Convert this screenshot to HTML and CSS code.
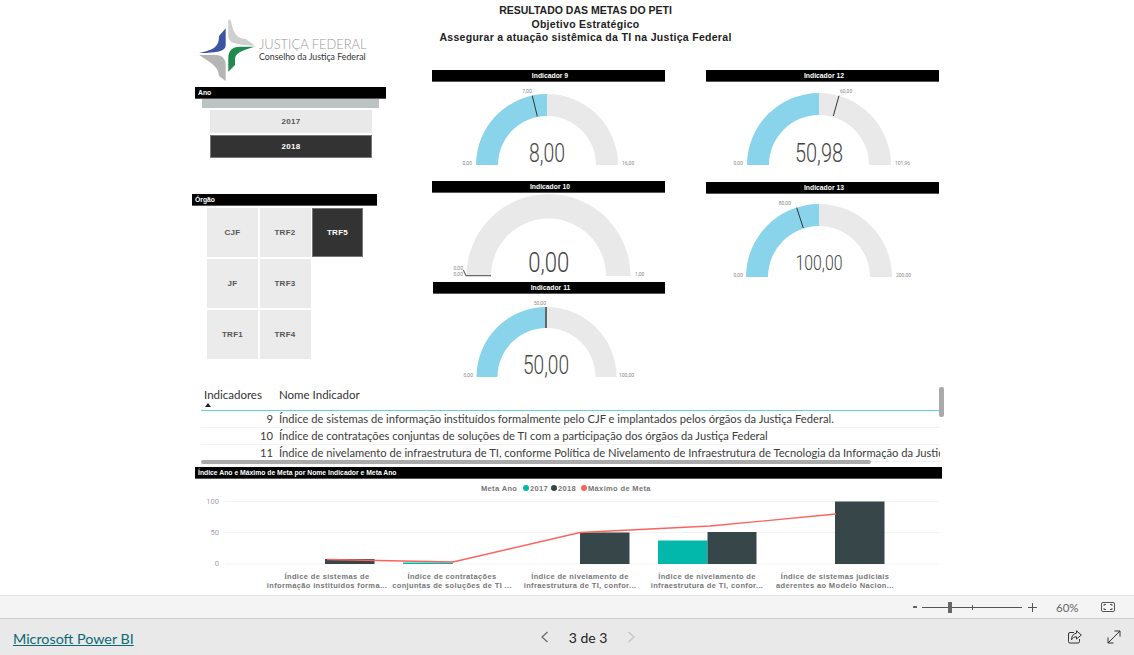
FILE: index.html
```html
<!DOCTYPE html>
<html lang="pt-BR">
<head>
<meta charset="UTF-8" />
<title>Resultado das Metas do PETI</title>
<link rel="stylesheet" href="styles.css">
</head>
<body>

<!-- ==========  REPORT CANVAS  ========== -->
<main class="canvas">
    <div class="top">

        <!-- Logo + slicers -->
        <aside class="side">
            <div class="logo">
                <svg width="61" height="66" viewBox="0 0 61 66">
                    <path fill="#3a56a0" d="M27.7 10.300 V27 C27.700 33 20 35 1 35 C13 32 21 31 21 18 Z"/>
                    <path fill="#cfcfcf" d="M30.300 1.300 V18 C30.300 24 35 27 56.700 27.500 L48 21 C40 21 35 16 33 3 Z"/>
                    <path fill="#1f8a4c" d="M56.700 28.700 H42 C34 28.700 30.300 33 30.300 40 V53.700 L37 47 V42 C37 35 42 33 56.700 28.700 Z"/>
                    <path fill="#b5b5b5" d="M1.300 37 H18 C24 37 27.700 41 27.700 47 V63 L21 58 C20 47 12 45 1.300 37 Z"/>
                </svg>
                <div class="logo-text">
                    <span class="logo-name">JUSTIÇA FEDERAL</span>
                    <span class="logo-sub">Conselho da Justiça Federal</span>
                </div>
            </div>

            <section class="slicer-ano">
                <h3 class="bar">Ano</h3>
                <div class="ano-search"></div>
                <button class="chip chip-ano">2017</button>
                <button class="chip chip-ano chip-on">2018</button>
            </section>

            <section class="slicer-orgao">
                <h3 class="bar">Órgão</h3>
                <div class="orgao-grid">
                    <button class="chip">CJF</button>
                    <button class="chip">TRF2</button>
                    <button class="chip chip-on">TRF5</button>
                    <button class="chip">JF</button>
                    <button class="chip">TRF3</button>
                    <span></span>
                    <button class="chip">TRF1</button>
                    <button class="chip">TRF4</button>
                </div>
            </section>
        </aside>

        <div class="center">
            <header class="title">
                <h1>RESULTADO DAS METAS DO PETI</h1>
                <h2>Objetivo Estratégico</h2>
                <h2>Assegurar a atuação sistêmica da TI na Justiça Federal</h2>
            </header>

            <!-- Gauges -->
            <div class="gauges">
                <div class="gauge-col">
                    <div class="gauge">
                        <h4 class="bar bar-center">Indicador 9</h4>
                        <svg width="233" height="99">
                            <path class="arc-fill" d="M44 83 A71 71 0 0 1 115 12 V34 A49 49 0 0 0 66 83 Z"/>
                            <path class="arc-rest" d="M115 12 A71 71 0 0 1 186 83 H164 A49 49 0 0 0 115 34 Z"/>
                            <line class="target" x1="100.3" y1="13.7" x2="105.3" y2="34.3"/>
                            <text class="tick" x="95" y="11" text-anchor="middle">7,00</text>
                            <text class="tick" x="40" y="83" text-anchor="end">0,00</text>
                            <text class="tick" x="190" y="83">16,00</text>
                            <text class="val" x="115" y="80" text-anchor="middle" textLength="36" lengthAdjust="spacingAndGlyphs">8,00</text>
                        </svg>
                    </div>
                    <div class="gauge">
                        <h4 class="bar bar-center">Indicador 10</h4>
                        <svg width="233" height="89">
                            <path class="arc-rest" d="M34.5 83 A82 82 0 0 1 198.5 83 H174 A57.5 57.5 0 0 0 59 83 Z"/>
                            <polyline class="target-zero" points="31.3,77 34,82.7 59,82.7"/>
                            <text class="tick" x="31" y="77" text-anchor="end">0,00</text>
                            <text class="tick" x="31" y="83" text-anchor="end">0,00</text>
                            <text class="tick" x="203" y="83">1,00</text>
                            <text class="val val-big" x="116.8" y="79" text-anchor="middle" textLength="41" lengthAdjust="spacingAndGlyphs">0,00</text>
                        </svg>
                    </div>
                    <div class="gauge gauge-shift">
                        <h4 class="bar bar-center">Indicador 11</h4>
                        <svg width="233" height="90">
                            <path class="arc-fill" d="M43.5 83 A70 70 0 0 1 113.5 13 V34 A49 49 0 0 0 64.5 83 Z"/>
                            <path class="arc-rest" d="M113.5 13 A70 70 0 0 1 183.5 83 H162.5 A49 49 0 0 0 113.5 34 Z"/>
                            <line class="target-mid" x1="113" y1="13" x2="113" y2="34"/>
                            <text class="tick" x="113" y="11" text-anchor="end">50,00</text>
                            <text class="tick" x="40" y="83" text-anchor="end">0,00</text>
                            <text class="tick" x="186" y="83">100,00</text>
                            <text class="val" x="113" y="80" text-anchor="middle" textLength="46" lengthAdjust="spacingAndGlyphs">50,00</text>
                        </svg>
                    </div>
                </div>

                <div class="gauge-col">
                    <div class="gauge">
                        <h4 class="bar bar-center">Indicador 12</h4>
                        <svg width="233" height="100">
                            <path class="arc-fill" d="M41 83 A72 72 0 0 1 113 11 V33 A50 50 0 0 0 63 83 Z"/>
                            <path class="arc-rest" d="M113 11 A72 72 0 0 1 185 83 H163 A50 50 0 0 0 113 33 Z"/>
                            <line class="target" x1="133" y1="13.7" x2="127.3" y2="34"/>
                            <text class="tick" x="134" y="11">60,00</text>
                            <text class="tick" x="37" y="83" text-anchor="end">0,00</text>
                            <text class="tick" x="189" y="83">101,96</text>
                            <text class="val" x="113" y="80" text-anchor="middle" textLength="48" lengthAdjust="spacingAndGlyphs">50,98</text>
                        </svg>
                    </div>
                    <div class="gauge">
                        <h4 class="bar bar-center">Indicador 13</h4>
                        <svg width="233" height="90">
                            <path class="arc-fill" d="M40 83 A73 73 0 0 1 113 10 V32 A51 51 0 0 0 62 83 Z"/>
                            <path class="arc-rest" d="M113 10 A73 73 0 0 1 186 83 H164 A51 51 0 0 0 113 32 Z"/>
                            <line class="target" x1="90.7" y1="13.7" x2="97.3" y2="34"/>
                            <text class="tick" x="85" y="11" text-anchor="end">80,00</text>
                            <text class="tick" x="37" y="83" text-anchor="end">0,00</text>
                            <text class="tick" x="190" y="83">200,00</text>
                            <text class="val val-small" x="113" y="76" text-anchor="middle" textLength="47" lengthAdjust="spacingAndGlyphs">100,00</text>
                        </svg>
                    </div>
                </div>
            </div>
        </div>
    </div>

    <!-- ==========  TABLE  ========== -->
    <section class="table">
        <div class="row row-head">
            <div class="col-id">
                Indicadores
                <i class="sort"></i>
            </div>
            <div>Nome Indicador</div>
        </div>
        <div class="row">
            <div class="col-num">9</div>
            <div>Índice de sistemas de informação instituídos formalmente pelo CJF e implantados pelos órgãos da Justiça Federal.</div>
        </div>
        <div class="row">
            <div class="col-num">10</div>
            <div>Índice de contratações conjuntas de soluções de TI com a participação dos órgãos da Justiça Federal</div>
        </div>
        <div class="row">
            <div class="col-num">11</div>
            <div>Índice de nivelamento de infraestrutura de TI, conforme Política de Nivelamento de Infraestrutura de Tecnologia da Informação da Justiça Federal</div>
        </div>
        <div class="scroll-v"></div>
        <div class="scroll-h"></div>
    </section>

    <!-- ==========  COMBO CHART  ========== -->
    <section class="chart">
        <h4 class="bar">Índice Ano e Máximo de Meta por Nome Indicador e Meta Ano</h4>
        <svg width="750" height="116">
            <text class="legend" x="289" y="12">Meta Ano</text>
            <circle cx="334" cy="9" r="3" fill="#01b8aa"/>
            <text class="legend" x="338" y="12">2017</text>
            <circle cx="362" cy="9" r="3" fill="#374649"/>
            <text class="legend" x="366" y="12">2018</text>
            <circle cx="392" cy="9" r="3" fill="#fd625e"/>
            <text class="legend" x="396" y="12">Máximo de Meta</text>

            <line class="grid" x1="33" y1="22.5" x2="747" y2="22.5"/>
            <line class="grid" x1="33" y1="53.5" x2="747" y2="53.5"/>
            <line class="grid" x1="33" y1="85" x2="747" y2="85"/>
            <text class="axis" x="27" y="25" text-anchor="end">100</text>
            <text class="axis" x="27" y="56" text-anchor="end">50</text>
            <text class="axis" x="27" y="87" text-anchor="end">0</text>

            <rect class="b17" x="211" y="83.5" width="50" height="1.5"/>
            <rect class="b17" x="466" y="61.5" width="49.5" height="23.5"/>
            <rect class="b18" x="133" y="80" width="49.5" height="5"/>
            <rect class="b18" x="388" y="53.5" width="49.5" height="31.5"/>
            <rect class="b18" x="515.5" y="53" width="49" height="32"/>
            <rect class="b18" x="643" y="22.5" width="49.5" height="62.5"/>
            <polyline class="line" points="135,80.5 261,83 388,53.5 518,47 644,35"/>

            <g class="cat" text-anchor="middle">
                <text x="135" y="99.5">Índice de sistemas de</text>
                <text x="135" y="109">informação instituídos forma...</text>
                <text x="260" y="99.5">Índice de contratações</text>
                <text x="260" y="109">conjuntas de soluções de TI ...</text>
                <text x="388" y="99.5">Índice de nivelamento de</text>
                <text x="388" y="109">infraestrutura de TI, confor...</text>
                <text x="515" y="99.5">Índice de nivelamento de</text>
                <text x="515" y="109">infraestrutura de TI, confor...</text>
                <text x="643" y="99.5">Índice de sistemas judiciais</text>
                <text x="643" y="109">aderentes ao Modelo Nacion...</text>
            </g>
        </svg>
    </section>
</main>

<!-- ==========  ZOOM BAR  ========== -->
<div class="zoombar">
    <span class="zoom-minus"></span>
    <div class="slider"><i class="slider-mark"></i><i class="slider-thumb"></i></div>
    <svg class="zoom-plus" width="9" height="9" viewBox="0 0 9 9"><path d="M4.5 0 V9 M0 4.5 H9" stroke="#555" fill="none"/></svg>
    <span class="zoom-pct">60%</span>
    <svg class="zoom-fit" width="14" height="10" viewBox="0 0 14 10" fill="none" stroke="#555">
        <rect x="0.5" y="0.5" width="13" height="9" rx="1.5"/>
        <path d="M3 4 V2.5 H5 M11 4 V2.5 H9 M3 6 V7.5 H5 M11 6 V7.5 H9"/>
    </svg>
</div>

<!-- ==========  FOOTER  ========== -->
<footer class="footer">
    <a class="brand" href="#">Microsoft Power BI</a>
    <nav class="pager">
        <svg width="9" height="12" viewBox="0 0 9 12"><path d="M7.5 1 L2 6 L7.5 11" stroke="#5f6b70" fill="none" stroke-width="1.2"/></svg>
        <span>3 de 3</span>
        <svg width="9" height="12" viewBox="0 0 9 12"><path d="M1.5 1 L7 6 L1.5 11" stroke="#c4c4c4" fill="none" stroke-width="1.2"/></svg>
    </nav>
    <div class="foot-icons">
        <svg width="14" height="14" viewBox="0 0 14 14" fill="none" stroke="#333">
            <path d="M6 2.5 H2 Q0.5 2.5 0.5 4 V11.5 Q0.5 13 2 13 H10 Q11.5 13 11.5 11.5 V9"/>
            <path d="M8.5 0.8 L13.3 5 L8.5 9 V6.8 C6 6.8 4.5 7.8 3.5 9.8 C3.5 6 5.5 3.6 8.5 3.3 Z"/>
        </svg>
        <svg width="14" height="14" viewBox="0 0 14 14" fill="none" stroke="#333">
            <path d="M1 13 L13 1 M7.5 1 H13 V6.5 M1 7.5 V13 H6.5"/>
        </svg>
    </div>
</footer>

</body>
</html>
```

FILE: styles.css
```css
/* ========  RESET  ======== */
*, *::before, *::after { box-sizing: border-box; margin: 0; padding: 0; }
:root {
    --fill: #8ad4eb;
    --rest: #e9e9e9;
    --chip: #ebebeb;
    --dark: #333;
}
html, body { height: 100%; }
body {
    display: flex;
    flex-direction: column;
    overflow: hidden;
    background: #fff;
    font-family: "Open Sans", sans-serif;
    color: #333;
}

/* ========  CANVAS  ======== */
.canvas {
    height: 595px;
    padding-left: 192px;
    overflow: hidden;
}
.top {
    display: flex;
    height: 386px;
}
.side { width: 240px; }
.center { flex: 1; }

/* Black title strips used on every visual */
.bar {
    height: 12px;
    padding-left: 3px;
    background: #000;
    border-bottom: 1px solid #555;
    color: #fff;
    font: bold 6.8px/11px "Liberation Sans", sans-serif;
    white-space: nowrap;
}
.bar-center { text-align: center; }

/* ========  LOGO  ======== */
.logo {
    display: flex;
    height: 87px;
    padding: 18px 0 0 6px;
}
.logo svg { flex: none; }
.logo-text {
    display: flex;
    flex-direction: column;
    padding-top: 19px;
}
.logo-name {
    font: 300 12.9px/14px "Lato", sans-serif;
    color: #999;
    white-space: nowrap;
}
.logo-sub {
    font: 8.8px/12px "Lato", sans-serif;
    color: #333;
    white-space: nowrap;
}

/* ========  SLICERS  ======== */
.chip {
    display: flex;
    align-items: center;
    justify-content: center;
    border: none;
    background: var(--chip);
    color: #555;
    font: bold 8px "Liberation Sans", sans-serif;
    letter-spacing: .3px;
}
.chip-on {
    background: var(--dark);
    color: #fff;
    border: 1px solid #777;
}
.slicer-ano {
    width: 191px;
    margin-left: 3px;
}
.ano-search {
    height: 9px;
    margin: 0 7px 2px;
    background: #bcc3c3;
}
.chip-ano {
    width: 162px;
    height: 23px;
    margin: 0 0 2px 15px;
    background: #e9e9e9;
}
.chip-ano.chip-on { background: var(--dark); }
.slicer-orgao {
    width: 185px;
    margin-top: 36px;
}
.orgao-grid {
    display: grid;
    grid-template-columns: repeat(3, 51px);
    grid-template-rows: repeat(3, 49px);
    gap: 2px 1.5px;
    margin: 1.5px 0 0 15px;
}

/* ========  TITLE  ======== */
.title {
    width: 307px;
    height: 70px;
    padding-top: 4px;
    text-align: center;
    font-family: "Liberation Sans", sans-serif;
    color: #222;
}
.title h1, .title h2 {
    font-size: 10.5px;
    font-weight: bold;
    line-height: 13.5px;
    white-space: nowrap;
}
.title h2 { letter-spacing: .3px; }

/* ========  GAUGES  ======== */
.gauges {
    display: flex;
    gap: 41px;
}
.gauge-col { width: 233px; }
.gauge svg { display: block; }
.gauge-shift { margin-left: 1px; }
.arc-fill { fill: var(--fill); }
.arc-rest { fill: var(--rest); }
.target { stroke: #333; stroke-width: 1; }
.target-zero { stroke: #666; stroke-width: 1.2; fill: none; }
.target-mid { stroke: #666; stroke-width: 2; }
.tick {
    font: 5px "Roboto", sans-serif;
    fill: #8a8a8a;
}
.val {
    font: 300 25px "Roboto", sans-serif;
    fill: #444;
}
.val-big { font-size: 27px; }
.val-small { font-size: 20px; }

/* ========  TABLE  ======== */
.table {
    position: relative;
    width: 752px;
    height: 81px;
    font-family: "Lato", sans-serif;
    font-size: 11.2px;
    color: #3c3c3c;
    overflow: hidden;
}
.row {
    display: grid;
    grid-template-columns: 72px 1fr;
    column-gap: 6px;
    width: 739px;
    height: 17px;
    margin-left: 9px;
    border-bottom: 1px solid #f0f0f0;
    line-height: 16px;
    white-space: nowrap;
    overflow: hidden;
}
.row-head {
    height: 25px;
    padding-top: 1px;
    border-bottom: 1px solid #66d4d0;
    color: #333;
    font-size: 11.5px;
    line-height: 16px;
}
.col-id { padding-left: 3px; }
.col-num { text-align: right; }
.sort {
    display: block;
    width: 0;
    height: 0;
    margin: 0 0 0 1px;
    border: 3.5px solid transparent;
    border-top: none;
    border-bottom: 4px solid #222;
}
.scroll-v {
    position: absolute;
    top: 1px;
    left: 747px;
    width: 5px;
    height: 30px;
    border-radius: 2px;
    background: #aaa;
}
.scroll-h {
    position: absolute;
    top: 74px;
    left: 9px;
    width: 670px;
    height: 4px;
    border-radius: 2px;
    background: #aaa;
}

/* ========  CHART  ======== */
.chart {
    width: 750px;
    margin-left: 3px;
}
.chart .bar { width: 747px; }
.chart svg { display: block; margin-left: -3px; }
.legend, .cat text {
    font: bold 7.5px "Liberation Sans", sans-serif;
    letter-spacing: .35px;
    fill: #777;
}
.grid { stroke: #f4f4f4; stroke-width: 1; }
.axis {
    font: 7.5px "Roboto", sans-serif;
    fill: #a7a0b0;
}
.b17 { fill: #01b8aa; }
.b18 { fill: #374649; }
.line { fill: none; stroke: #fd625e; stroke-width: 1.3; }

/* ========  ZOOM BAR  ======== */
.zoombar {
    display: flex;
    align-items: center;
    height: 24px;
    padding-left: 913px;
    background: #f4f4f4;
    border-top: 1px solid #e3e3e3;
    border-bottom: 1px solid #ccc;
    color: #666;
}
.zoom-minus {
    width: 4px;
    height: 2px;
    background: #666;
}
.slider {
    position: relative;
    width: 100px;
    height: 1px;
    margin-left: 5px;
    background: #555;
}
.slider-thumb {
    position: absolute;
    top: -5px;
    left: 26px;
    width: 4px;
    height: 11px;
    background: #666;
}
.slider-mark {
    position: absolute;
    top: -2px;
    left: 50px;
    width: 1px;
    height: 5px;
    background: #555;
}
.zoom-plus { margin-left: 6px; }
.zoom-pct {
    margin-left: 19px;
    font: 11.5px "Lato", sans-serif;
}
.zoom-fit { margin-left: 22px; }

/* ========  FOOTER  ======== */
.footer {
    display: flex;
    flex: 1;
    align-items: center;
    padding: 0 13px;
    background: #e9e9e9;
}
.brand {
    margin-top: 3px;
    font: 14.3px "Lato", sans-serif;
    color: #0b6a72;
}
.pager {
    display: flex;
    align-items: center;
    gap: 20px;
    margin-left: 406px;
    font: 14px "Lato", sans-serif;
    color: #222;
}
.foot-icons {
    display: flex;
    gap: 25px;
    margin-left: auto;
}
```
